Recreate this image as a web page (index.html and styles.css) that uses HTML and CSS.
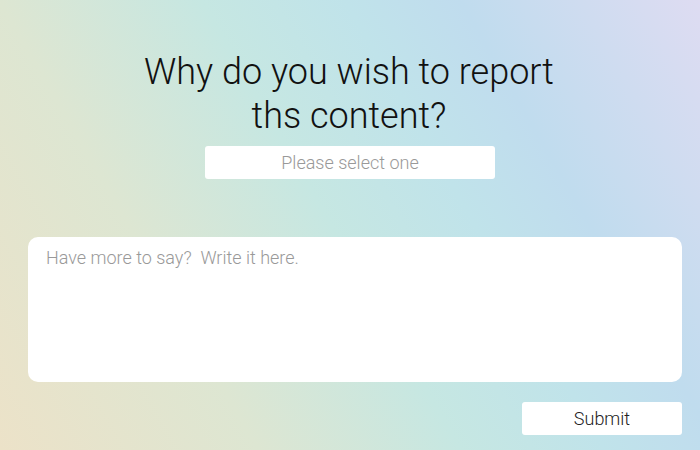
FILE: index.html
```html
<!DOCTYPE html>
<html lang="en">
<head>
<meta charset="utf-8">
<title>Report content</title>
<link rel="stylesheet" href="styles.css">
</head>
<body>
<main class="page">
  <h1 class="title">Why do you wish to report<br>ths content?</h1>
  <div class="select">Please select one</div>
  <textarea class="comment" placeholder="Have more to say?&nbsp; Write it here."></textarea>
  <div class="actions">
    <button class="submit" type="button">Submit</button>
  </div>
</main>
</body>
</html>
```

FILE: styles.css
```css
html, body {
  margin: 0;
  padding: 0;
}
body {
  width: 700px;
  height: 450px;
  overflow: hidden;
  font-family: Roboto, "Liberation Sans", sans-serif;
  font-weight: 300;
  background: linear-gradient(60deg, #ece2c8 0%, #dde6d2 27%, #c6e7e2 48%, #c0e3ea 63%, #c0dcee 75%, #dedcf2 100%);
}
.page {
  box-sizing: border-box;
  height: 450px;
  padding: 50px 0 0 0;
  display: flex;
  flex-direction: column;
  align-items: center;
}
.title {
  margin: 0 0 0 -2px;
  font-size: 36px;
  line-height: 44px;
  font-weight: 300;
  color: #111;
  text-align: center;
}
.select {
  margin-top: 8px;
  width: 290px;
  height: 33px;
  box-sizing: border-box;
  background: #fff;
  border-radius: 3px;
  color: #999;
  font-size: 18px;
  line-height: 33px;
  text-align: center;
}
.comment {
  margin: 58px 18px 0 28px;
  align-self: stretch;
  height: 145px;
  box-sizing: border-box;
  border: none;
  border-radius: 10px;
  background: #fff;
  padding: 10px 18px;
  font-family: inherit;
  font-weight: 300;
  font-size: 18px;
  line-height: 22px;
  color: #333;
  resize: none;
  outline: none;
}
.comment::placeholder {
  color: #999;
}
.actions {
  margin: 20px 18px 0 28px;
  align-self: stretch;
  display: flex;
  justify-content: flex-end;
}
.submit {
  width: 160px;
  height: 33px;
  border: none;
  border-radius: 3px;
  background: #fff;
  font-family: inherit;
  font-weight: 300;
  font-size: 18px;
  color: #222;
  padding: 0;
}
```
